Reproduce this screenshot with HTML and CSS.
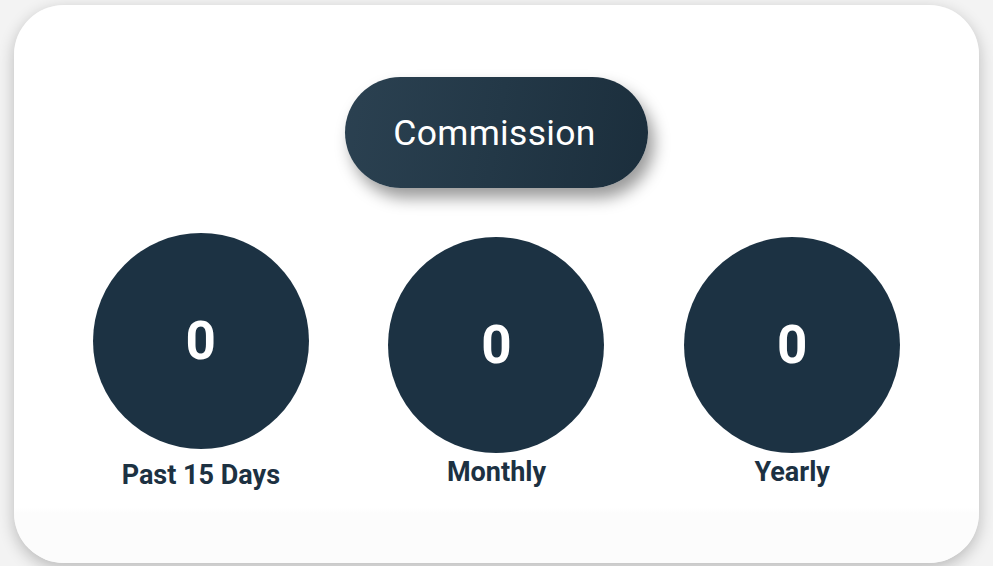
FILE: index.html
```html
<!DOCTYPE html>
<html lang="en">
<head>
<meta charset="utf-8">
<title>Commission</title>
<link rel="stylesheet" href="styles.css">
</head>
<body>
  <div class="card">
    <div class="header">
      <div class="pill">Commission</div>
    </div>
    <div class="stats">
      <div class="stat stat--first">
        <div class="circle">0</div>
        <div class="label">Past 15 Days</div>
      </div>
      <div class="stat">
        <div class="circle">0</div>
        <div class="label">Monthly</div>
      </div>
      <div class="stat">
        <div class="circle">0</div>
        <div class="label">Yearly</div>
      </div>
    </div>
  </div>
</body>
</html>
```

FILE: styles.css
```css
html, body {
  margin: 0;
  padding: 0;
}
body {
  background: #f3f3f3;
  font-family: Roboto, "Liberation Sans", sans-serif;
  width: 993px;
  height: 566px;
  overflow: hidden;
  padding-top: 5px;
  box-sizing: border-box;
}
.card {
  margin: 0 14px;
  width: 965px;
  height: 558px;
  box-sizing: border-box;
  background: linear-gradient(180deg, #ffffff 0%, #ffffff 90%, #fcfcfc 91%, #fcfcfc 100%);
  border-radius: 50px;
  box-shadow: 0 5px 16px rgba(0, 0, 0, 0.24);
  padding: 72px 39px 0;
}
.header {
  display: flex;
  justify-content: center;
}
.pill {
  width: 303px;
  height: 111px;
  border-radius: 56px;
  background: linear-gradient(100deg, #2b4151 0%, #233847 50%, #1b2e3c 100%);
  box-shadow: 6px 10px 16px rgba(0, 0, 0, 0.4);
  color: #ffffff;
  font-size: 35.5px;
  font-weight: 400;
  display: flex;
  align-items: center;
  justify-content: center;
  letter-spacing: 0.3px;
  padding-right: 4px;
  box-sizing: border-box;
}
.stats {
  display: grid;
  grid-template-columns: repeat(3, 1fr);
  margin-top: 49px;
}
.stat {
  display: flex;
  flex-direction: column;
  align-items: center;
}
.circle {
  width: 216px;
  height: 216px;
  border-radius: 50%;
  background: #1c3243;
  color: #ffffff;
  font-size: 53px;
  font-weight: 700;
  display: flex;
  align-items: center;
  justify-content: center;
}
.label {
  margin-top: 3px;
  font-size: 27px;
  font-weight: 700;
  color: #1c3142;
  line-height: 32px;
}
.stat--first {
  margin-top: -4px;
}
.stat--first .label {
  margin-top: 10px;
}
```
